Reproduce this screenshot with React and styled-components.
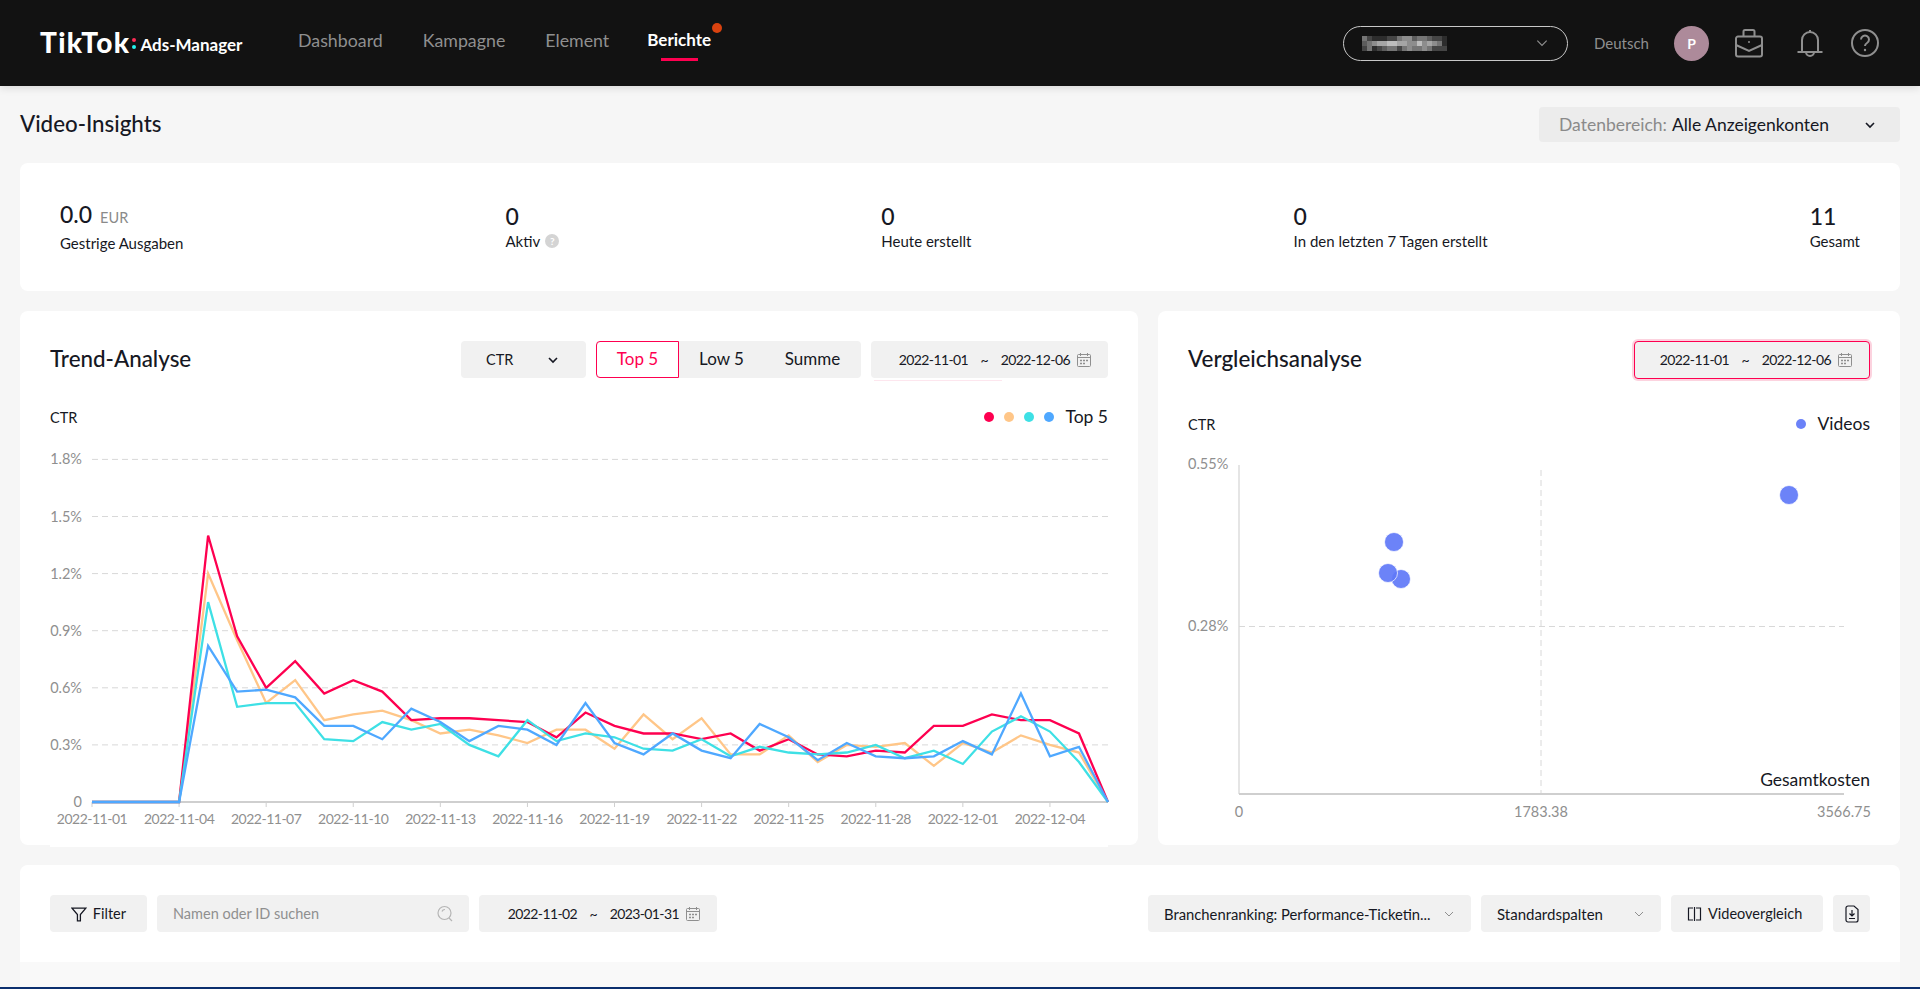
import React from 'react';
import styled, { createGlobalStyle } from 'styled-components';

const FONT = `Lato, 'Noto Sans', 'Liberation Sans', sans-serif`;

const GlobalStyle = createGlobalStyle`
  html, body {
    margin: 0;
    height: 100%;
    background: #f6f6f6;
    overflow: hidden;
  }
  body {
    font-family: ${FONT};
    color: #161823;
  }
  * {
    box-sizing: border-box;
  }
`;

const Page = styled.div`
  width: 1920px;
  height: 989px;
  display: flex;
  flex-direction: column;
  border-bottom: 2px solid #0b2f6e;
`;

const Header = styled.header`
  height: 86px;
  flex: none;
  display: flex;
  align-items: center;
  background: #121212;
  padding: 0 40px;
  box-shadow: 0 2px 8px rgba(0, 0, 0, 0.12);
`;

const Logo = styled.div`
  display: flex;
  align-items: center;
  width: 258px;
  color: #fff;
  white-space: nowrap;
  margin-top: -2px;
`;

const LogoMark = styled.span`
  font-size: 28px;
  font-weight: 900;
  letter-spacing: 1.4px;
`;

const LogoDots = styled.span`
  display: flex;
  flex-direction: column;
  gap: 3px;
  margin: 3px 4px 0 2px;
  i {
    width: 4px;
    height: 4px;
    border-radius: 50%;
    background: #fe2c55;
  }
  i + i {
    background: #25f4ee;
  }
`;

const LogoText = styled.span`
  font-size: 17px;
  font-weight: 700;
  margin-top: 4px;
`;

const Nav = styled.nav`
  display: flex;
  gap: 40px;
  margin-top: -6px;
`;

const NavItem = styled.a`
  position: relative;
  font-size: ${(p) => (p.$active ? 17 : 17.8)}px;
  color: ${(p) => (p.$active ? '#fff' : '#8f8f8f')};
  font-weight: ${(p) => (p.$active ? 700 : 400)};
  ${(p) =>
    p.$active &&
    `
    margin-left: -2px;
    &::before {
      content: '';
      position: absolute;
      right: -11px;
      top: -6px;
      width: 10px;
      height: 10px;
      border-radius: 50%;
      background: #d9420f;
    }
    &::after {
      content: '';
      position: absolute;
      left: 14px;
      right: 13px;
      bottom: -10px;
      height: 3px;
      background: #fe0050;
    }
  `}
`;

const HeaderRight = styled.div`
  margin-left: auto;
  display: flex;
  align-items: center;
  color: #8f8f8f;
`;

const AccountSelect = styled.div`
  width: 225px;
  height: 35px;
  border: 1px solid #c8c8c8;
  border-radius: 18px;
  padding: 0 18px;
  display: flex;
  align-items: center;
  justify-content: space-between;
  margin-right: 26px;
`;

const Lang = styled.span`
  font-size: 15px;
  margin-right: 25px;
  color: #8f8f8f;
`;

const Avatar = styled.div`
  width: 35px;
  height: 35px;
  border-radius: 50%;
  background: #ad8a9a;
  color: #fff;
  font-size: 14px;
  font-weight: 700;
  display: flex;
  align-items: center;
  justify-content: center;
  margin-right: 25px;
`;

const HeaderIcon = styled.svg`
  width: 30px;
  height: 30px;
  margin-left: ${(p) => p.$gap || 0}px;
  stroke: #8f8f8f;
  stroke-width: 2;
  fill: none;
  flex: none;
`;

const Content = styled.main`
  flex: 1;
  display: flex;
  flex-direction: column;
  padding: 21px 20px 0;
  min-height: 0;
`;

const TitleRow = styled.div`
  height: 35px;
  display: flex;
  align-items: center;
  justify-content: space-between;
  margin-bottom: 21px;
`;

const PageTitle = styled.h1`
  margin: 0;
  padding-bottom: 2px;
  font-size: 22.3px;
  font-weight: 500;
  color: #161823;
`;

const ScopeSelect = styled.div`
  width: 361px;
  height: 35px;
  background: #ececec;
  border-radius: 4px;
  padding: 0 24px 0 20px;
  display: flex;
  align-items: center;
  font-size: 17.5px;
  white-space: nowrap;
  em {
    font-style: normal;
    color: #8a8a8a;
    margin-right: 5px;
  }
  svg {
    margin-left: auto;
  }
`;

const Card = styled.section`
  position: relative;
  background: #fff;
  border-radius: 8px;
`;

const StatsCard = styled(Card)`
  height: 128px;
  padding: 0 40px;
  display: flex;
  align-items: center;
  justify-content: space-between;
  margin-bottom: 20px;
`;

const Stat = styled.div`
  display: flex;
  flex-direction: column;
  gap: 3px;
  margin-top: -1px;
`;

const StatValue = styled.div`
  font-size: 23px;
  font-weight: 500;
  line-height: 26px;
  small {
    font-size: 14.5px;
    font-weight: 400;
    color: #8a8a8a;
    margin-left: 8px;
  }
`;

const StatLabel = styled.div`
  font-size: 15px;
  line-height: 18px;
  display: flex;
  align-items: center;
  gap: 5px;
`;

const HelpDot = styled.span`
  width: 14px;
  height: 14px;
  border-radius: 50%;
  background: #d4d4d4;
  color: #fff;
  font-size: 10px;
  font-weight: 700;
  display: flex;
  align-items: center;
  justify-content: center;
`;

const ChartsRow = styled.div`
  display: flex;
  gap: 20px;
  height: 534px;
  margin-bottom: 20px;
`;

const TrendCard = styled(Card)`
  flex: 1;
  padding: 30px 30px 0;
  &::after {
    content: '';
    position: absolute;
    left: 30px;
    right: 30px;
    bottom: -2px;
    height: 2px;
    background: #fff;
  }
`;

const CompareCard = styled(Card)`
  width: 742px;
  padding: 30px 30px 0;
`;

const CardHead = styled.div`
  display: flex;
  align-items: center;
  height: 37px;
  gap: 10px;
`;

const CardTitle = styled.h2`
  margin: 0 auto 0 0;
  padding-bottom: 3px;
  font-size: 22.4px;
  font-weight: 500;
`;

const Control = styled.div`
  position: relative;
  height: 37px;
  width: ${(p) => (p.$w ? `${p.$w}px` : 'auto')};
  background: #f1f1f1;
  border-radius: 4px;
  display: flex;
  align-items: center;
  flex: none;
  font-size: ${(p) => p.$fs || 14.5}px;
  white-space: nowrap;
  padding: 0 ${(p) => p.$pad || 0}px;
`;

const MetricSelect = styled(Control)`
  justify-content: space-between;
  svg {
    margin-right: 2px;
  }
`;

const Tabs = styled.div`
  height: 37px;
  width: 265px;
  display: flex;
  background: #f1f1f1;
  border-radius: 4px;
`;

const Tab = styled.div`
  display: flex;
  align-items: center;
  justify-content: center;
  width: ${(p) => p.$w}px;
  padding-bottom: 2px;
  font-size: 17px;
  color: ${(p) => (p.$active ? '#fe0050' : '#161823')};
  ${(p) =>
    p.$active &&
    `
    background: #fff;
    border: 1px solid #fe0050;
    border-radius: 4px 0 0 4px;
  `}
`;

const DateBox = styled(Control)`
  justify-content: flex-end;
  padding: 0 17px 0 0;
  font-size: 14px;
  letter-spacing: -0.6px;
  svg {
    margin-left: 7px;
  }
  ${(p) =>
    p.$focused &&
    `
    border: 1px solid #fe0050;
    box-shadow: 0 0 0 2px #fcd3df;
    height: 38px;
  `}
  ${(p) =>
    p.$marked &&
    `
    &::after {
      content: '';
      position: absolute;
      left: 3px;
      bottom: -3px;
      width: 128px;
      height: 1px;
      background: #fde6ee;
    }
  `}
`;

const Tilde = styled.span`
  margin: 0 12.5px;
`;

const LegendRow = styled.div`
  display: flex;
  align-items: center;
  justify-content: space-between;
  height: 18px;
  margin-top: ${(p) => p.$top}px;
  font-size: 14.5px;
`;

const Legend = styled.div`
  display: flex;
  align-items: center;
  gap: 10px;
  font-size: 17.5px;
`;

const Swatch = styled.span`
  width: 10px;
  height: 10px;
  border-radius: 50%;
  background: ${(p) => p.$color};
`;

const LegendLabel = styled.span`
  margin: -2px 0 0 1px;
`;

const ChartSvg = styled.svg`
  display: block;
  margin-top: ${(p) => p.$top}px;
  overflow: visible;
  text {
    font-family: ${FONT};
    font-size: 14.5px;
    fill: #8f8f8f;
  }
  text.tick {
    font-size: 14px;
    letter-spacing: -0.5px;
  }
  text.dark {
    fill: #161823;
    font-size: 17.5px;
  }
`;

const TableCard = styled(Card)`
  flex: 1;
  border-radius: 8px 8px 0 0;
  background: #f9f9f9;
  overflow: hidden;
`;

const Toolbar = styled.div`
  height: 97px;
  background: #fff;
  padding: 30px 30px 0;
  display: flex;
  gap: 10px;
`;

const Spacer = styled.div`
  flex: 1;
`;

const Placeholder = styled.span`
  color: #8f8f8f;
`;

const ToolButton = styled(Control)`
  gap: ${(p) => p.$gap || 0}px;
  justify-content: ${(p) => p.$justify || 'flex-start'};
`;

const Chevron = ({ color = '#161823', size = 12, weight = 1.6 }) => (
  <svg width={size} height={size} viewBox="0 0 12 12" fill="none" stroke={color} strokeWidth={weight}>
    <path d="M2 4l4 4 4-4" />
  </svg>
);

const Calendar = () => (
  <svg width="14" height="14" viewBox="0 0 14 14" fill="none" stroke="#8f8f8f" strokeWidth="1">
    <rect x="0.5" y="1.5" width="13" height="12" rx="1" />
    <path d="M0.5 4.5h13M3.5 0v3M10.5 0v3" />
    <path d="M3 7.5h2M6 7.5h2M9 7.5h2M3 10.5h2M6 10.5h2" strokeWidth="1.4" />
  </svg>
);

const mosaic = [
  '31000113442332110',
  '23455665544645430',
  '13012331343343111',
];

const Mosaic = () => (
  <svg width="85" height="15" viewBox="0 0 17 3" shapeRendering="crispEdges">
    {mosaic.map((row, y) =>
      row.split('').map((c, x) => (
        <rect key={`${x}-${y}`} x={x} y={y} width="1" height="1" fill={`rgb(${45 + c * 24},${45 + c * 24},${45 + c * 24})`} />
      ))
    )}
  </svg>
);

const DateRange = ({ from, to, ...rest }) => (
  <DateBox {...rest}>
    <span>{from}</span>
    <Tilde>~</Tilde>
    <span>{to}</span>
    <Calendar />
  </DateBox>
);

const series = [
  {
    color: '#ffc688',
    data: [0, 0, 0, 0, 1.2, 0.85, 0.52, 0.64, 0.43, 0.46, 0.48, 0.43, 0.36, 0.38, 0.35, 0.31, 0.38, 0.38, 0.28, 0.46, 0.33, 0.44, 0.25, 0.25, 0.35, 0.21, 0.3, 0.29, 0.31, 0.19, 0.31, 0.26, 0.35, 0.3, 0.26, 0],
  },
  {
    color: '#fe0050',
    data: [0, 0, 0, 0, 1.4, 0.87, 0.6, 0.74, 0.57, 0.64, 0.58, 0.43, 0.44, 0.44, 0.43, 0.42, 0.34, 0.47, 0.4, 0.36, 0.36, 0.33, 0.36, 0.27, 0.33, 0.25, 0.24, 0.27, 0.26, 0.4, 0.4, 0.46, 0.43, 0.43, 0.36, 0],
  },
  {
    color: '#3ee0e5',
    data: [0, 0, 0, 0, 1.05, 0.5, 0.52, 0.52, 0.33, 0.32, 0.42, 0.38, 0.41, 0.3, 0.24, 0.43, 0.32, 0.36, 0.34, 0.28, 0.27, 0.33, 0.24, 0.29, 0.26, 0.25, 0.26, 0.3, 0.23, 0.27, 0.2, 0.37, 0.45, 0.37, 0.21, 0],
  },
  {
    color: '#4fa8ff',
    data: [0, 0, 0, 0, 0.82, 0.58, 0.59, 0.55, 0.4, 0.4, 0.33, 0.49, 0.42, 0.32, 0.4, 0.38, 0.3, 0.52, 0.31, 0.25, 0.36, 0.27, 0.23, 0.41, 0.34, 0.22, 0.31, 0.24, 0.23, 0.24, 0.32, 0.25, 0.57, 0.24, 0.29, 0],
  },
];

const legendColors = ['#fe0050', '#ffc688', '#3ee0e5', '#4fa8ff'];

const yTicks = ['0', '0.3%', '0.6%', '0.9%', '1.2%', '1.5%', '1.8%'];
const xTicks = [
  '2022-11-01', '2022-11-04', '2022-11-07', '2022-11-10', '2022-11-13', '2022-11-16',
  '2022-11-19', '2022-11-22', '2022-11-25', '2022-11-28', '2022-12-01', '2022-12-04',
];

const TrendChart = () => {
  const left = 42;
  const right = 1058;
  const zero = 362;
  const perStep = 57.1;
  const step = (right - left) / 35;
  const px = (i) => left + i * step;
  const py = (v) => zero - (v / 0.3) * perStep;
  return (
    <ChartSvg width="1058" height="395" $top={14}>
      {yTicks.map((t, i) => (
        <g key={t}>
          {i > 0 && (
            <line x1={left} x2={right} y1={py(i * 0.3)} y2={py(i * 0.3)} stroke="#d8d8d8" strokeDasharray="6 4" />
          )}
          <text x="32" y={py(i * 0.3) + 5} textAnchor="end">{t}</text>
        </g>
      ))}
      <line x1={left} x2={right} y1={zero} y2={zero} stroke="#cfcfcf" strokeWidth="2" />
      {xTicks.map((t, i) => (
        <g key={t}>
          <line x1={px(i * 3)} x2={px(i * 3)} y1={zero} y2={zero + 5} stroke="#cfcfcf" />
          <text className="tick" x={px(i * 3)} y={zero + 22} textAnchor="middle">{t}</text>
        </g>
      ))}
      {series.map((s) => (
        <polyline
          key={s.color}
          fill="none"
          stroke={s.color}
          strokeWidth="2.3"
          strokeLinejoin="miter"
          points={s.data.map((v, i) => `${px(i)},${py(v)}`).join(' ')}
        />
      ))}
    </ChartSvg>
  );
};

const dots = [
  [601, 45],
  [206, 92],
  [213, 129],
  [200, 123],
];

const ScatterChart = () => (
  <ChartSvg width="682" height="380" $top={17}>
    <line x1="51" x2="51" y1="15" y2="344" stroke="#dcdcdc" strokeWidth="1.5" />
    <line x1="353" x2="353" y1="20" y2="344" stroke="#d8d8d8" strokeDasharray="6 4" />
    <line x1="51" x2="656" y1="176.5" y2="176.5" stroke="#d8d8d8" strokeDasharray="6 4" />
    <line x1="51" x2="656" y1="344" y2="344" stroke="#cfcfcf" strokeWidth="2" />
    <text x="0" y="19">0.55%</text>
    <text x="0" y="181">0.28%</text>
    <text className="dark" x="682" y="336" textAnchor="end">Gesamtkosten</text>
    <text x="51" y="367" textAnchor="middle">0</text>
    <text x="353" y="367" textAnchor="middle">1783.38</text>
    <text x="656" y="367" textAnchor="middle">3566.75</text>
    {dots.map(([x, y]) => (
      <circle key={x} cx={x} cy={y} r="9.5" fill="#5f78f7" fillOpacity="0.92" stroke="#fff" strokeOpacity="0.7" />
    ))}
  </ChartSvg>
);

const App = () => (
  <Page>
    <GlobalStyle />
    <Header>
      <Logo>
        <LogoMark>TikTok</LogoMark>
        <LogoDots><i /><i /></LogoDots>
        <LogoText>Ads-Manager</LogoText>
      </Logo>
      <Nav>
        <NavItem>Dashboard</NavItem>
        <NavItem>Kampagne</NavItem>
        <NavItem>Element</NavItem>
        <NavItem $active>Berichte</NavItem>
      </Nav>
      <HeaderRight>
        <AccountSelect>
          <Mosaic />
          <Chevron color="#8f8f8f" size={14} weight={1} />
        </AccountSelect>
        <Lang>Deutsch</Lang>
        <Avatar>P</Avatar>
        <HeaderIcon viewBox="0 0 30 30">
          <path d="M2 10.5a2 2 0 0 1 2-2h22a2 2 0 0 1 2 2v16a2 2 0 0 1-2 2H4a2 2 0 0 1-2-2z" />
          <path d="M9.5 8V3.5a1.5 1.5 0 0 1 1.5-1.5h8a1.5 1.5 0 0 1 1.5 1.5V8" />
          <path d="M2 17l13 6 13-6" />
          <circle cx="15" cy="14" r="1" fill="#8f8f8f" stroke="none" />
        </HeaderIcon>
        <HeaderIcon viewBox="0 0 30 30" $gap={31}>
          <path d="M7 24V12a8 8 0 0 1 16 0v12" />
          <path d="M2.5 24h25" />
          <path d="M15 2v2" />
          <path d="M11 24a4 4 0 0 0 8 0" />
        </HeaderIcon>
        <HeaderIcon viewBox="0 0 30 30" $gap={25}>
          <circle cx="15" cy="15" r="13" />
          <path d="M11 11.5a4 4 0 1 1 6 3.5c-1.4.8-2 1.6-2 3" />
          <circle cx="15" cy="22" r="1.2" fill="#8f8f8f" stroke="none" />
        </HeaderIcon>
      </HeaderRight>
    </Header>
    <Content>
      <TitleRow>
        <PageTitle>Video-Insights</PageTitle>
        <ScopeSelect>
          <em>Datenbereich:</em> Alle Anzeigenkonten
          <Chevron />
        </ScopeSelect>
      </TitleRow>
      <StatsCard>
        <Stat>
          <StatValue>0.0<small>EUR</small></StatValue>
          <StatLabel>Gestrige Ausgaben</StatLabel>
        </Stat>
        <Stat>
          <StatValue>0</StatValue>
          <StatLabel>Aktiv <HelpDot>?</HelpDot></StatLabel>
        </Stat>
        <Stat>
          <StatValue>0</StatValue>
          <StatLabel>Heute erstellt</StatLabel>
        </Stat>
        <Stat>
          <StatValue>0</StatValue>
          <StatLabel>In den letzten 7 Tagen erstellt</StatLabel>
        </Stat>
        <Stat>
          <StatValue>11</StatValue>
          <StatLabel>Gesamt</StatLabel>
        </Stat>
      </StatsCard>
      <ChartsRow>
        <TrendCard>
          <CardHead>
            <CardTitle>Trend-Analyse</CardTitle>
            <MetricSelect $w={125} $pad={25}>
              CTR
              <Chevron />
            </MetricSelect>
            <Tabs>
              <Tab $active $w={83}>Top 5</Tab>
              <Tab $w={85}>Low 5</Tab>
              <Tab $w={97}>Summe</Tab>
            </Tabs>
            <DateRange $w={237} $marked from="2022-11-01" to="2022-12-06" />
          </CardHead>
          <LegendRow $top={30}>
            <span>CTR</span>
            <Legend>
              {legendColors.map((c) => (
                <Swatch key={c} $color={c} />
              ))}
              <LegendLabel>Top 5</LegendLabel>
            </Legend>
          </LegendRow>
          <TrendChart />
        </TrendCard>
        <CompareCard>
          <CardHead>
            <CardTitle>Vergleichsanalyse</CardTitle>
            <DateRange $w={236} $focused from="2022-11-01" to="2022-12-06" />
          </CardHead>
          <LegendRow $top={37}>
            <span>CTR</span>
            <Legend>
              <Swatch $color="#6b82f8" />
              <LegendLabel>Videos</LegendLabel>
            </Legend>
          </LegendRow>
          <ScatterChart />
        </CompareCard>
      </ChartsRow>
      <TableCard>
        <Toolbar>
          <ToolButton $w={97} $pad={21} $gap={6}>
            <svg width="16" height="16" viewBox="0 0 16 16" fill="none" stroke="#161823" strokeWidth="1.3">
              <path d="M1 2h14l-5.5 6.5V15h-3V8.5z" />
            </svg>
            Filter
          </ToolButton>
          <ToolButton $w={312} $pad={16} $justify="space-between">
            <Placeholder>Namen oder ID suchen</Placeholder>
            <svg width="16" height="18" viewBox="0 0 16 18" fill="none" stroke="#b5b5b5" strokeWidth="1.2">
              <circle cx="7.5" cy="8" r="6.5" />
              <path d="M12 13l3 3M5 6.5a3 3 0 0 1 3-2" />
            </svg>
          </ToolButton>
          <DateRange $w={238} from="2022-11-02" to="2023-01-31" />
          <Spacer />
          <ToolButton $w={323} $pad={16} $fs={14.8} $justify="space-between">
            Branchenranking: Performance-Ticketin...
            <Chevron color="#8f8f8f" size={12} weight={1} />
          </ToolButton>
          <ToolButton $w={180} $pad={16} $fs={15} $justify="space-between">
            Standardspalten
            <Chevron color="#8f8f8f" size={12} weight={1} />
          </ToolButton>
          <ToolButton $w={152} $pad={16} $gap={6}>
            <svg width="15" height="14" viewBox="0 0 15 14" fill="none" stroke="#161823" strokeWidth="1.2">
              <path d="M6 1H1.5v12H6M9 1h4.5v12H9M7.5 0v14" />
            </svg>
            Videovergleich
          </ToolButton>
          <ToolButton $w={37} $justify="center">
            <svg width="14" height="18" viewBox="0 0 14 18" fill="none" stroke="#161823" strokeWidth="1.2">
              <path d="M1 3a2 2 0 0 1 2-2h6l4 3.5V15a2 2 0 0 1-2 2H3a2 2 0 0 1-2-2z" />
              <path d="M7 5v6M4.5 8.5L7 11l2.5-2.5M4 13.5h6" />
            </svg>
          </ToolButton>
        </Toolbar>
      </TableCard>
    </Content>
  </Page>
);

export default App;
